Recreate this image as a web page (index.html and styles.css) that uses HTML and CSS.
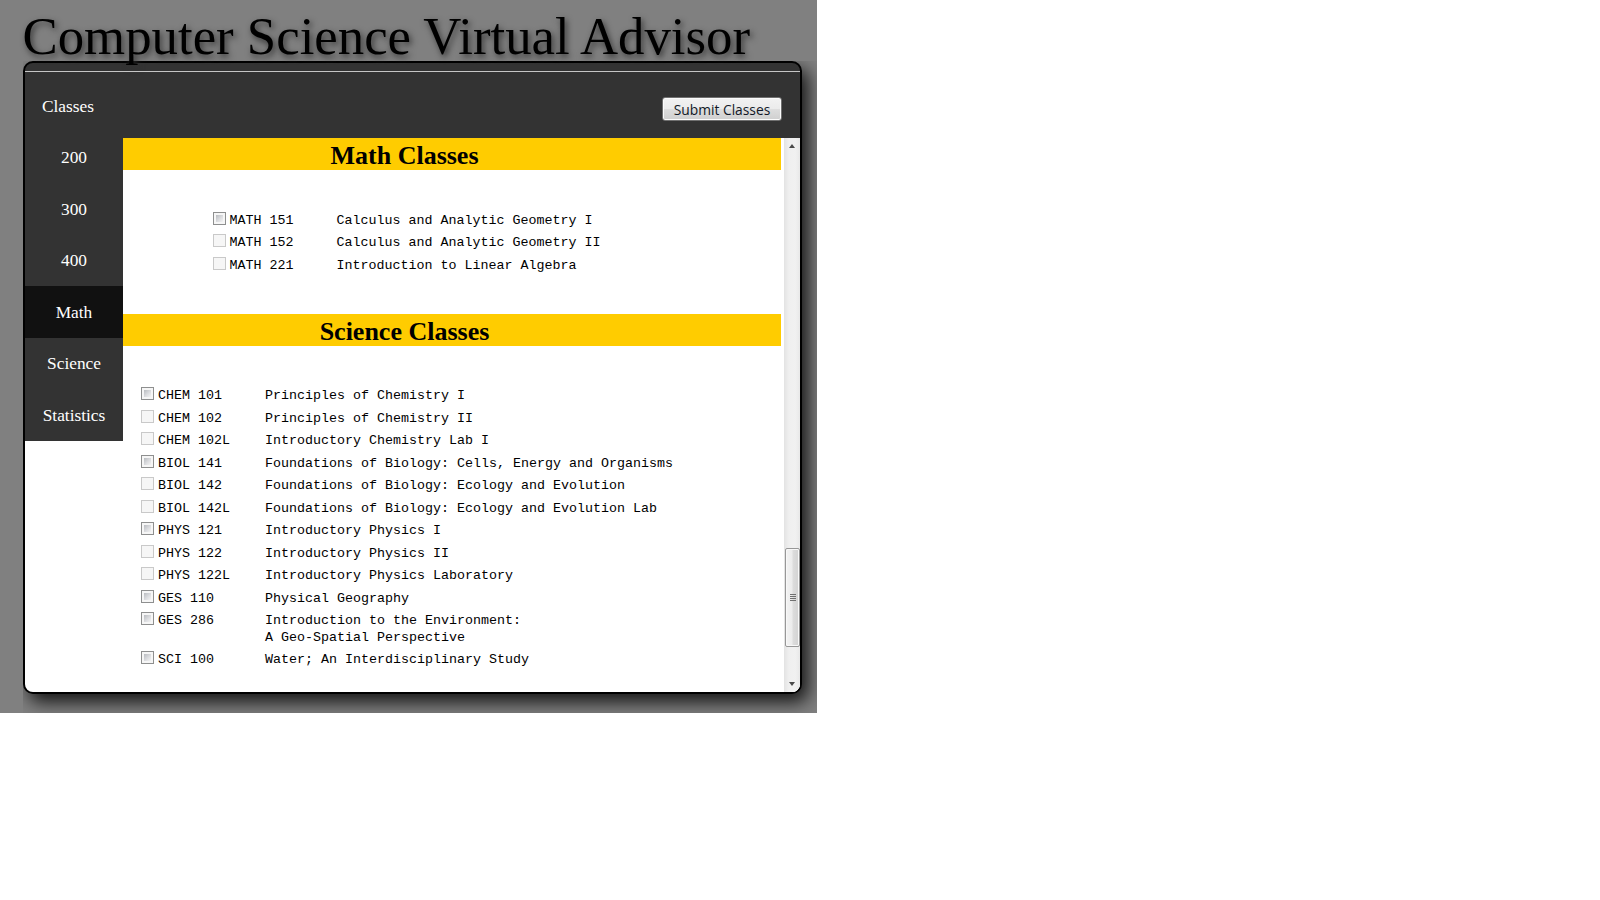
FILE: index.html
```html
<!DOCTYPE html>
<html lang="en">
<head>
<meta charset="utf-8">
<title>Computer Science Virtual Advisor</title>
<link rel="stylesheet" href="styles.css">
</head>
<body>
<div class="page">
  <h1 class="title">Computer Science Virtual Advisor</h1>
  <div class="stage">
    <div class="panel">
      <div class="panel-top"></div>
      <header class="toolbar">
        <span class="toolbar-label">Classes</span>
        <button class="submit" type="button">Submit Classes</button>
      </header>
      <div class="panel-body">
        <nav class="sidebar">
          <ul class="menu">
            <li class="menu-item">200</li>
            <li class="menu-item">300</li>
            <li class="menu-item">400</li>
            <li class="menu-item active">Math</li>
            <li class="menu-item">Science</li>
            <li class="menu-item">Statistics</li>
          </ul>
        </nav>
        <div class="viewport">
          <main class="content">
            <h2 class="section-title">Math Classes</h2>
            <div class="course-list math">
              <label class="course"><input class="check" type="checkbox"><span class="code">MATH 151</span><span class="desc">Calculus and Analytic Geometry I</span></label>
              <label class="course"><input class="check" type="checkbox" disabled><span class="code">MATH 152</span><span class="desc">Calculus and Analytic Geometry II</span></label>
              <label class="course"><input class="check" type="checkbox" disabled><span class="code">MATH 221</span><span class="desc">Introduction to Linear Algebra</span></label>
            </div>
            <h2 class="section-title">Science Classes</h2>
            <div class="course-list science">
              <label class="course"><input class="check" type="checkbox"><span class="code">CHEM 101</span><span class="desc">Principles of Chemistry I</span></label>
              <label class="course"><input class="check" type="checkbox" disabled><span class="code">CHEM 102</span><span class="desc">Principles of Chemistry II</span></label>
              <label class="course"><input class="check" type="checkbox" disabled><span class="code">CHEM 102L</span><span class="desc">Introductory Chemistry Lab I</span></label>
              <label class="course"><input class="check" type="checkbox"><span class="code">BIOL 141</span><span class="desc">Foundations of Biology: Cells, Energy and Organisms</span></label>
              <label class="course"><input class="check" type="checkbox" disabled><span class="code">BIOL 142</span><span class="desc">Foundations of Biology: Ecology and Evolution</span></label>
              <label class="course"><input class="check" type="checkbox" disabled><span class="code">BIOL 142L</span><span class="desc">Foundations of Biology: Ecology and Evolution Lab</span></label>
              <label class="course"><input class="check" type="checkbox"><span class="code">PHYS 121</span><span class="desc">Introductory Physics I</span></label>
              <label class="course"><input class="check" type="checkbox" disabled><span class="code">PHYS 122</span><span class="desc">Introductory Physics II</span></label>
              <label class="course"><input class="check" type="checkbox" disabled><span class="code">PHYS 122L</span><span class="desc">Introductory Physics Laboratory</span></label>
              <label class="course"><input class="check" type="checkbox"><span class="code">GES 110</span><span class="desc">Physical Geography</span></label>
              <label class="course"><input class="check" type="checkbox"><span class="code">GES 286</span><span class="desc">Introduction to the Environment:<br>A Geo-Spatial Perspective</span></label>
              <label class="course"><input class="check" type="checkbox"><span class="code">SCI 100</span><span class="desc">Water; An Interdisciplinary Study</span></label>
            </div>
          </main>
          <div class="scrollbar" aria-hidden="true">
            <div class="sb-arrow up"></div>
            <div class="sb-track">
              <div class="sb-thumb">
                <span class="grip"></span><span class="grip"></span><span class="grip"></span><span class="grip"></span>
              </div>
            </div>
            <div class="sb-arrow down"></div>
          </div>
        </div>
      </div>
    </div>
  </div>
</div>
</body>
</html>
```

FILE: styles.css
```css
html, body {
  margin: 0;
  padding: 0;
  background: #ffffff;
}

.page {
  width: 817px;
  height: 713px;
  background: #808080;
  overflow: hidden;
}

.title {
  margin: 0;
  padding: 10px 0 0 22.5px;
  height: 51px;
  font-family: "Liberation Serif", "Times New Roman", serif;
  font-size: 52.8px;
  line-height: 52px;
  font-weight: normal;
  color: #000;
  white-space: nowrap;
  text-shadow: 2px 3px 6px #333;
}

.stage {
  margin-left: 23px;
  width: 794px;
  height: 652px;
  overflow: hidden;
}

.panel {
  width: 775px;
  height: 629px;
  border: 2px solid #000;
  border-radius: 10px;
  background: #333333;
  overflow: hidden;
  display: flex;
  flex-direction: column;
  box-shadow: 6px 8px 18px rgba(0, 0, 0, 0.85);
}

.panel-top {
  height: 8px;
  border-bottom: 1px solid #c6c6c6;
  flex: none;
}

.toolbar {
  height: 59.5px;
  flex: none;
  display: flex;
  align-items: flex-start;
  padding: 0 18px 0 17px;
}

.toolbar-label {
  margin-top: 25px;
  font-family: "Liberation Serif", "Times New Roman", serif;
  font-size: 17.33px;
  color: #fff;
}

.submit {
  margin: 25px 0 0 auto;
  width: 120px;
  height: 24px;
  padding: 0;
  font-family: "Open Sans", "Noto Sans", sans-serif;
  font-size: 13.8px;
  color: #111827;
  border: 1px solid #707070;
  border-radius: 3px;
  background: linear-gradient(#f2f2f2 0%, #ebebeb 48%, #dddddd 52%, #cfcfcf 100%);
  box-shadow: inset 0 0 0 1px #fbfbfb;
}

.panel-body {
  flex: 1;
  display: flex;
  align-items: flex-start;
  min-height: 0;
  background: #fff;
}

.sidebar {
  width: 98px;
  flex: none;
  background: #333333;
}

.menu {
  list-style: none;
  margin: 0;
  padding: 0;
}

.menu-item {
  box-sizing: border-box;
  height: 51.6px;
  padding-top: 1.5px;
  display: flex;
  align-items: center;
  justify-content: center;
  font-family: "Liberation Serif", "Times New Roman", serif;
  font-size: 17.33px;
  color: #fff;
}

.menu-item.active {
  background: #111111;
}

.viewport {
  flex: 1;
  align-self: stretch;
  display: flex;
  background: #fff;
  border-top: 6.5px solid #333333;
  min-width: 0;
}

.content {
  flex: 1;
  overflow: hidden;
}

.section-title {
  box-sizing: border-box;
  margin: 0 3px 0 0;
  height: 32.5px;
  padding: 4px 95px 0 0;
  line-height: 28.5px;
  background: #ffcc00;
  text-align: center;
  font-family: "Liberation Serif", "Times New Roman", serif;
  font-size: 26px;
  font-weight: bold;
  color: #000;
}

.course-list {
  margin: 39.5px 0 36.85px;
}

.course-list.math {
  margin-left: 89.5px;
}

.course-list.science {
  margin-top: 38.5px;
  margin-left: 18px;
}

.course {
  display: flex;
  align-items: flex-start;
  padding: 3px 0 3.25px;
  font-family: "Liberation Mono", "Courier New", monospace;
  font-size: 13.33px;
  line-height: 16.3px;
  color: #000;
  white-space: nowrap;
}

.check {
  -webkit-appearance: none;
  appearance: none;
  box-sizing: border-box;
  flex: none;
  width: 13px;
  height: 13px;
  margin: -1px 4px 0 0;
  padding: 2px;
  border: 1px solid #8e8f8f;
  background: linear-gradient(135deg, #b9bcc0 0%, #dcdde0 55%, #f4f4f4 100%) content-box, #f6f6f6;
}

.check:disabled {
  border-color: #c9c9c9;
  background: #f6f6f6;
}

.code {
  width: 107px;
  flex: none;
}

.desc {
  flex: none;
}

.scrollbar {
  width: 16px;
  flex: none;
  display: flex;
  flex-direction: column;
  background: linear-gradient(90deg, #e3e3e3 0%, #efefef 30%, #f1f1f1 70%, #e8e8e8 100%);
}

.sb-arrow {
  height: 17px;
  flex: none;
  display: flex;
  align-items: center;
  justify-content: center;
}

.sb-arrow::before {
  content: "";
  width: 0;
  height: 0;
  border-left: 3.5px solid transparent;
  border-right: 3.5px solid transparent;
}

.sb-arrow.up::before {
  border-bottom: 4px solid #4a4a4a;
}

.sb-arrow.down::before {
  border-top: 4px solid #4a4a4a;
}

.sb-track {
  flex: 1;
}

.sb-thumb {
  box-sizing: border-box;
  margin: 393px 0 0 1px;
  width: 15px;
  height: 99px;
  border: 1px solid #979797;
  border-radius: 2px;
  background: linear-gradient(90deg, #f3f3f3 0%, #ececec 45%, #dcdcdc 55%, #d2d2d2 100%);
  box-shadow: inset 0 0 0 1px #f8f8f8;
  display: flex;
  flex-direction: column;
  align-items: center;
  justify-content: center;
  gap: 1px;
}

.grip {
  display: block;
  width: 6px;
  height: 1px;
  background: #707070;
}
```
